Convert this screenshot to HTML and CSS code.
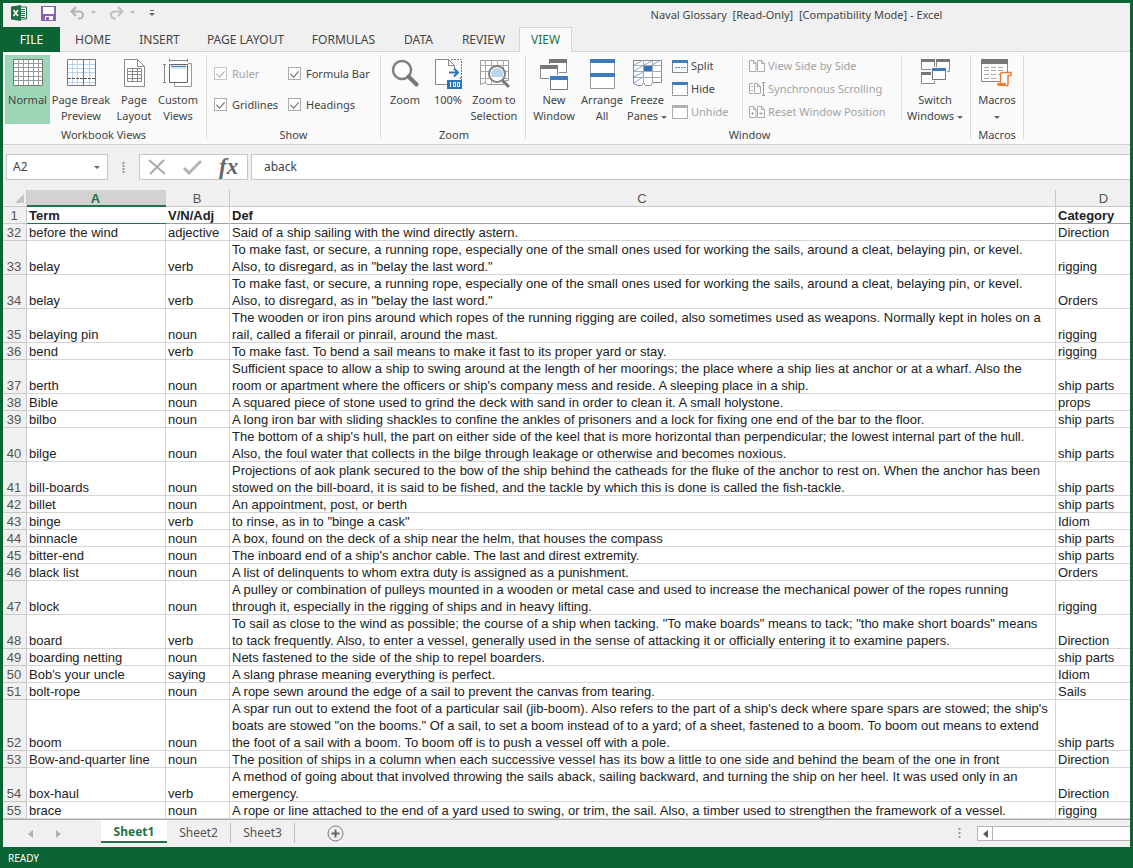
FILE: index.html
```html
<!DOCTYPE html>
<html lang="en">
<head>
<meta charset="utf-8">
<title>Naval Glossary - Excel</title>
<link rel="stylesheet" href="styles.css">
</head>
<body>
<div class="app">
  <header class="titlebar">
    <div class="quick">
      <svg class="logo" width="16" height="16" viewBox="0 0 16 16"><path d="M8 2h7.500v12H8z" fill="#fff" stroke="#1e7145"/><path d="M10 4.500h4M10 6.500h4M10 8.500h4M10 10.500h4M10 12.500h4" stroke="#1e7145"/><path d="M0 1.500L10 0v16L0 14.500z" fill="#1e7145"/><path d="M2.500 5l4.500 6M7 5l-4.500 6" stroke="#fff" stroke-width="1.500"/></svg>
      <button class="qbtn save" aria-label="Save"><svg width="15" height="15" viewBox="0 0 15 15"><path d="M0 0h15v15H0z" fill="#8a63b0"/><path d="M2 1h11v7H2zM4 10h8v4H4z" fill="#fff"/><path d="M5 11h3v3H5z" fill="#8a63b0"/></svg></button>
      <button class="qbtn undo" aria-label="Undo"><svg width="26" height="14" viewBox="0 0 26 14"><path d="M6 1L1.500 5.500 6 10M2 5.500h7a3.500 3.500 0 0 1 1 7H8" fill="none" stroke="#b4b4b4" stroke-width="2"/><path d="M21 5h5l-2.500 3z" fill="#b8b8b8"/></svg></button>
      <button class="qbtn redo" aria-label="Redo"><svg width="26" height="14" viewBox="0 0 26 14"><path d="M8 1l4.500 4.500L8 10M12 5.500H5a3.500 3.500 0 0 0-1 7h2" fill="none" stroke="#c0c0c0" stroke-width="2"/><path d="M20 5h5l-2.500 3z" fill="#b8b8b8"/></svg></button>
      <button class="qbtn more" aria-label="Customize toolbar"><svg width="6" height="7" viewBox="0 0 6 7"><path d="M1 .500h4" stroke="#666"/><path d="M0 3h6L3 6z" fill="#666"/></svg></button>
    </div>
    <h1 class="title">Naval Glossary&nbsp; [Read-Only]&nbsp; [Compatibility Mode] - Excel</h1>
  </header>

  <nav class="tabs">
    <button class="tab file">FILE</button>
    <button class="tab">HOME</button>
    <button class="tab">INSERT</button>
    <button class="tab">PAGE LAYOUT</button>
    <button class="tab">FORMULAS</button>
    <button class="tab">DATA</button>
    <button class="tab">REVIEW</button>
    <button class="tab active">VIEW</button>
  </nav>

  <section class="ribbon">
    <div class="group g-views">
      <div class="tools">
        <button class="big w-normal on"><svg width="30" height="27" viewBox="0 0 30 27"><path d="M.5.500h29v26H.500z" fill="#fff" stroke="#777"/><path d="M5.500 1v25M10.500 1v25M15.500 1v25M20.500 1v25M25.500 1v25M1 4.500h28M1 8.500h28M1 12.500h28M1 17.500h28M1 21.500h28" stroke="#9a9a9a"/></svg><span>Normal</span></button>
        <button class="big w-break"><svg width="30" height="27" viewBox="0 0 30 27"><path d="M1.500.500h28v26h-28z" fill="#fff" stroke="#777"/><path d="M6.500 1v25M11.500 1v25M23.500 1v25M2 5.500h27M2 9.500h27M2 13.500h27M2 23.500h27" stroke="#b9d3ea"/><path d="M17.500 1v25" stroke="#4a7ebb"/><path d="M2 19.500h27" stroke="#555" stroke-dasharray="3 1"/></svg><span>Page Break<br>Preview</span></button>
        <button class="big w-page"><svg width="23" height="28" viewBox="0 0 23 28"><path d="M1.500.500h13l7 7v20h-20z" fill="#fff" stroke="#888"/><path d="M14.500.500v7h7" fill="none" stroke="#888"/><path d="M4.500 9.500h14v13h-14zM4.500 12.500h14M4.500 15.500h14M4.500 19.500h14M9.500 9.500v13M14.500 9.500v13" fill="none" stroke="#888"/></svg><span>Page<br>Layout</span></button>
        <button class="big w-page"><svg width="30" height="28" viewBox="0 0 30 28"><path d="M25 4.500h3.500v23h-17V24" fill="#fff" stroke="#999"/><path d="M6.500 5.500h18v18h-18z" fill="#fff" stroke="#666"/><path d="M8 6h15v4H8z" fill="#d5e5f4"/><path d="M8 7.500h15" stroke="#4a7ebb"/><path d="M6 1.500h18M6.500 0v3M24.500 0v3M1.500 5v18M0 5.500h3M0 23.500h3" stroke="#888"/></svg><span>Custom<br>Views</span></button>
      </div>
      <div class="caption">Workbook Views</div>
    </div>
    <div class="group g-show">
      <div class="checks">
        <label class="dim"><input type="checkbox" checked disabled>Ruler</label>
        <label><input type="checkbox" checked>Formula Bar</label>
        <label><input type="checkbox" checked>Gridlines</label>
        <label><input type="checkbox" checked>Headings</label>
      </div>
      <div class="caption">Show</div>
    </div>
    <div class="group g-zoom">
      <div class="tools">
        <button class="big w-page"><svg width="28" height="28" viewBox="0 0 28 28"><circle cx="11" cy="11" r="9" fill="#fff" stroke="#808080" stroke-width="2.500"/><path d="M17.500 17.500l8 8" stroke="#777" stroke-width="4" stroke-linecap="round"/></svg><span>Zoom</span></button>
        <button class="big w-hundred"><svg width="28" height="31" viewBox="0 0 28 31"><path d="M13 25.500H1.500V.500h13l6 6V9" fill="#fff" stroke="#888"/><path d="M14.500.500v6h6" fill="none" stroke="#888"/><path d="M17 .500h10.500V21M26.500 18v3" fill="none" stroke="#777" stroke-dasharray="2 1"/><path d="M15 13.500h8M20 9.500l4 4-4 4" fill="none" stroke="#2f75b9" stroke-width="2"/><path d="M13 21h15v9H13z" fill="#2e75b6"/><path d="M16.500 23v5M19.500 23.500h2v4h-2zM23.500 23.500h2v4h-2z" stroke="#fff" fill="none"/></svg><span>100%</span></button>
        <button class="big w-sel"><svg width="31" height="29" viewBox="0 0 31 29"><path d="M1.500 1.500h28v20h-3l-2 4H8l-2-2-4.500 2z" fill="#fff" stroke="#999"/><path d="M6.500 1v24M12.500 1v24M18.500 1v5M24.500 1v24M1 6.500h28M1 12.500h28M1 19.500h28" stroke="#aaa"/><circle cx="18" cy="15" r="8" fill="#fff" stroke="#808080" stroke-width="2"/><path d="M12 15a6 6 0 0 1 12 0v3H12z" fill="#b9d5f0"/><path d="M24 22l5 5" stroke="#777" stroke-width="3" stroke-linecap="round"/></svg><span>Zoom to<br>Selection</span></button>
      </div>
      <div class="caption">Zoom</div>
    </div>
    <div class="group g-window">
      <div class="tools">
        <button class="big w-sel"><svg width="28" height="31" viewBox="0 0 28 31"><path d="M9.500.500h17v13h-17z" fill="#fff" stroke="#888"/><path d="M9 0h18v4H9z" fill="#777"/><path d="M0 5h19v15H0z" fill="#fafafa"/><path d="M.5 6.500h17v13H.500z" fill="#fff" stroke="#888"/><path d="M0 6h18v4H0z" fill="#777"/><path d="M9 16h18v15H9z" fill="#fafafa"/><path d="M10.500 17.500h17v13h-17z" fill="#fff" stroke="#777"/><path d="M10 17h18v4H10z" fill="#3f7cbc"/></svg><span>New<br>Window</span></button>
        <button class="big w-arr"><svg width="25" height="30" viewBox="0 0 25 30"><path d="M.5.500h24v29H.500z" fill="#fff" stroke="#999"/><path d="M0 0h25v4H0zM0 14h25v4H0z" fill="#3f7cbc"/></svg><span>Arrange<br>All</span></button>
        <button class="big w-page"><svg width="29" height="28" viewBox="0 0 29 28"><path d="M.5 1.500h28v22h-9l-2 3h-5l-2-3-2 3h-4l-4-2z" fill="#fff" stroke="#888"/><path d="M10.500 1v23M19.500 1v23M1 6.500h28M1 12.500h28M1 18.500h28" stroke="#aaa"/><path d="M1 6l9-5M1 12L20 1M1 18l9-5M1 24l9-6M19 6l9-5" stroke="#7ba6d4"/><path d="M11 7h8v5h-8z" fill="#2e75b6"/></svg><span>Freeze<br>Panes <i class="caret"></i></span></button>
        <div class="stack s1">
          <button class="small"><svg width="16" height="13" viewBox="0 0 16 13"><path d="M.5.500h15v12H.500z" fill="#fff" stroke="#888"/><path d="M0 0h16v3H0z" fill="#3f7cbc"/><path d="M3 7.500h11" stroke="#4a7ebb" stroke-dasharray="2 1"/></svg>Split</button>
          <button class="small"><svg width="16" height="14" viewBox="0 0 16 14"><path d="M.5.500h15v13H.500z" fill="#fff" stroke="#666" stroke-dasharray="2 1"/><path d="M0 0h16v3H0z" fill="#3f7cbc"/></svg>Hide</button>
          <button class="small dim" disabled><svg width="16" height="14" viewBox="0 0 16 14"><path d="M.5.500h15v13H.500z" fill="#fff" stroke="#aaa"/><path d="M0 0h16v3H0z" fill="#b0b0b0"/></svg>Unhide</button>
        </div>
        <div class="stack s2">
          <button class="small dim" disabled><svg width="16" height="12" viewBox="0 0 16 12"><path d="M.5.500h4l2.500 3v8H.500zM8.500.500h4l3 3v8h-7zM4.500.500v3H7M12.500.500v3h3" fill="#fff" stroke="#aaa"/></svg>View Side by Side</button>
          <button class="small dim" disabled><svg width="16" height="14" viewBox="0 0 16 14"><path d="M4 1.500H.500v10H4M2 4.500h2M2 8.500h2M5.500 1.500h3l3 3v7h-6zM8.500 1.500v3h3" fill="none" stroke="#aaa"/><path d="M13 .500h3M14.500 0v13M13 13.500h3" stroke="#999"/></svg>Synchronous Scrolling</button>
          <button class="small dim" disabled><svg width="16" height="12" viewBox="0 0 16 12"><path d="M.5.500h4l2.500 3v8H.500zM8.500.500h4l3 3v8h-7zM4.500.500v3H7M12.500.500v3h3M2 7.500h3M3.500 6v3M10 7.500h4M12 6v3" fill="#fff" stroke="#aaa"/></svg>Reset Window Position</button>
        </div>
        <button class="big w-switch"><svg width="29" height="26" viewBox="0 0 29 26"><path d="M.5.500h13v10H.500zM15.500.500h13v12h-13zM.5 13.500h13v11H.500z" fill="#fff" stroke="#888"/><path d="M0 0h14v3H0zM15 0h14v3H15zM0 13h14v3H0z" fill="#777"/><path d="M10 8h16v14H10z" fill="#fafafa"/><path d="M11.500 9.500h13v11h-13z" fill="#fff" stroke="#777"/><path d="M11 9h14v3H11z" fill="#3f7cbc"/></svg><span>Switch<br>Windows <i class="caret"></i></span></button>
      </div>
      <div class="caption">Window</div>
    </div>
    <div class="group g-macros">
      <div class="tools">
        <button class="big w-macro"><svg width="32" height="28" viewBox="0 0 32 28"><path d="M.5.500h26v22H.500z" fill="#fff" stroke="#888"/><path d="M0 0h27v5H0z" fill="#777"/><path d="M3 8.500h20M3 11.500h20M3 15.500h20M3 19.500h14" stroke="#aaa" stroke-dasharray="5 2"/><path d="M19.500 25V15.500q0-2 2-2H30v3h-3V25q0 2-2 2" fill="#fff" stroke="#ed7d31" stroke-width="1.500"/><path d="M16 24h9v3h-7q-2 0-2-3z" fill="#ed7d31"/></svg><span>Macros<br><i class="caret"></i></span></button>
      </div>
      <div class="caption">Macros</div>
    </div>
  </section>

  <section class="formula">
    <div class="namebox"><input class="name" aria-label="Name box" value="A2"><i class="caret"></i></div>
    <svg class="grip" width="3" height="11" viewBox="0 0 3 11"><path d="M.5 0h2v2h-2zM.5 3h2v2h-2zM.5 6h2v2h-2zM.5 9h2v2h-2z" fill="#999"/></svg>
    <div class="fxbox">
      <button aria-label="Cancel"><svg width="18" height="16" viewBox="0 0 18 16"><path d="M1 1l16 14M16 1L2 15" stroke="#aaa" stroke-width="2"/></svg></button>
      <button aria-label="Enter"><svg width="19" height="16" viewBox="0 0 19 16"><path d="M1 9l5 5L18 2" fill="none" stroke="#b4b4b4" stroke-width="3"/></svg></button>
      <button class="fx" aria-label="Insert function">fx</button>
    </div>
    <input class="entry" aria-label="Formula bar" value="aback">
  </section>

  <main class="sheet">
    <table>
      <colgroup><col class="c-n"><col class="c-a"><col class="c-b"><col class="c-c"><col class="c-d"></colgroup>
      <thead>
        <tr><th class="corner"><svg width="9" height="9" viewBox="0 0 9 9"><path d="M9 0v9H0z" fill="#c4c4c4"/></svg></th><th class="sel">A</th><th>B</th><th>C</th><th>D</th></tr>
      </thead>
      <tbody>
        <tr class="head"><th>1</th><td class="sel">Term</td><td>V/N/Adj</td><td>Def</td><td>Category</td></tr>
        <tr><th>32</th><td>before the wind</td><td>adjective</td><td>Said of a ship sailing with the wind directly astern.</td><td>Direction</td></tr>
        <tr><th>33</th><td>belay</td><td>verb</td><td>To make fast, or secure, a running rope, especially one of the small ones used for working the sails, around a cleat, belaying pin, or kevel.<br>Also, to disregard, as in "belay the last word."</td><td>rigging</td></tr>
        <tr><th>34</th><td>belay</td><td>verb</td><td>To make fast, or secure, a running rope, especially one of the small ones used for working the sails, around a cleat, belaying pin, or kevel.<br>Also, to disregard, as in "belay the last word."</td><td>Orders</td></tr>
        <tr><th>35</th><td>belaying pin</td><td>noun</td><td>The wooden or iron pins around which ropes of the running rigging are coiled, also sometimes used as weapons. Normally kept in holes on a<br>rail, called a fiferail or pinrail, around the mast.</td><td>rigging</td></tr>
        <tr><th>36</th><td>bend</td><td>verb</td><td>To make fast. To bend a sail means to make it fast to its proper yard or stay.</td><td>rigging</td></tr>
        <tr><th>37</th><td>berth</td><td>noun</td><td>Sufficient space to allow a ship to swing around at the length of her moorings; the place where a ship lies at anchor or at a wharf. Also the<br>room or apartment where the officers or ship's company mess and reside. A sleeping place in a ship.</td><td>ship parts</td></tr>
        <tr><th>38</th><td>Bible</td><td>noun</td><td>A squared piece of stone used to grind the deck with sand in order to clean it. A small holystone.</td><td>props</td></tr>
        <tr><th>39</th><td>bilbo</td><td>noun</td><td>A long iron bar with sliding shackles to confine the ankles of prisoners and a lock for fixing one end of the bar to the floor.</td><td>ship parts</td></tr>
        <tr><th>40</th><td>bilge</td><td>noun</td><td>The bottom of a ship's hull, the part on either side of the keel that is more horizontal than perpendicular; the lowest internal part of the hull.<br>Also, the foul water that collects in the bilge through leakage or otherwise and becomes noxious.</td><td>ship parts</td></tr>
        <tr><th>41</th><td>bill-boards</td><td>noun</td><td>Projections of aok plank secured to the bow of the ship behind the catheads for the fluke of the anchor to rest on. When the anchor has been<br>stowed on the bill-board, it is said to be fished, and the tackle by which this is done is called the fish-tackle.</td><td>ship parts</td></tr>
        <tr><th>42</th><td>billet</td><td>noun</td><td>An appointment, post, or berth</td><td>ship parts</td></tr>
        <tr><th>43</th><td>binge</td><td>verb</td><td>to rinse, as in to "binge a cask"</td><td>Idiom</td></tr>
        <tr><th>44</th><td>binnacle</td><td>noun</td><td>A box, found on the deck of a ship near the helm, that houses the compass</td><td>ship parts</td></tr>
        <tr><th>45</th><td>bitter-end</td><td>noun</td><td>The inboard end of a ship's anchor cable. The last and direst extremity.</td><td>ship parts</td></tr>
        <tr><th>46</th><td>black list</td><td>noun</td><td>A list of delinquents to whom extra duty is assigned as a punishment.</td><td>Orders</td></tr>
        <tr><th>47</th><td>block</td><td>noun</td><td>A pulley or combination of pulleys mounted in a wooden or metal case and used to increase the mechanical power of the ropes running<br>through it, especially in the rigging of ships and in heavy lifting.</td><td>rigging</td></tr>
        <tr><th>48</th><td>board</td><td>verb</td><td>To sail as close to the wind as possible; the course of a ship when tacking. "To make boards" means to tack; "tho make short boards" means<br>to tack frequently. Also, to enter a vessel, generally used in the sense of attacking it or officially entering it to examine papers.</td><td>Direction</td></tr>
        <tr><th>49</th><td>boarding netting</td><td>noun</td><td>Nets fastened to the side of the ship to repel boarders.</td><td>ship parts</td></tr>
        <tr><th>50</th><td>Bob's your uncle</td><td>saying</td><td>A slang phrase meaning everything is perfect.</td><td>Idiom</td></tr>
        <tr><th>51</th><td>bolt-rope</td><td>noun</td><td>A rope sewn around the edge of a sail to prevent the canvas from tearing.</td><td>Sails</td></tr>
        <tr><th>52</th><td>boom</td><td>noun</td><td>A spar run out to extend the foot of a particular sail (jib-boom). Also refers to the part of a ship's deck where spare spars are stowed; the ship's<br>boats are stowed "on the booms." Of a sail, to set a boom instead of to a yard; of a sheet, fastened to a boom. To boom out means to extend<br>the foot of a sail with a boom. To boom off is to push a vessel off with a pole.</td><td>ship parts</td></tr>
        <tr><th>53</th><td>Bow-and-quarter line</td><td>noun</td><td>The position of ships in a column when each successive vessel has its bow a little to one side and behind the beam of the one in front</td><td>Direction</td></tr>
        <tr><th>54</th><td>box-haul</td><td>verb</td><td>A method of going about that involved throwing the sails aback, sailing backward, and turning the ship on her heel. It was used only in an<br>emergency.</td><td>Direction</td></tr>
        <tr><th>55</th><td>brace</td><td>noun</td><td>A rope or line attached to the end of a yard used to swing, or trim, the sail. Also, a timber used to strengthen the framework of a vessel.</td><td>rigging</td></tr>
      </tbody>
    </table>
  </main>

  <section class="sheetbar">
    <div class="arrows">
      <button aria-label="Previous sheet"><svg width="5" height="8" viewBox="0 0 5 8"><path d="M5 0v8L0 4z" fill="#b0b0b0"/></svg></button>
      <button aria-label="Next sheet"><svg width="5" height="8" viewBox="0 0 5 8"><path d="M0 0v8l5-4z" fill="#b0b0b0"/></svg></button>
    </div>
    <button class="stab active">Sheet1</button>
    <button class="stab">Sheet2</button>
    <button class="stab">Sheet3</button>
    <button class="add" aria-label="New sheet"><svg width="17" height="17" viewBox="0 0 17 17"><circle cx="8.500" cy="8.500" r="7.500" fill="none" stroke="#777"/><path d="M8.500 4.500v8M4.500 8.500h8" stroke="#666" stroke-width="2"/></svg></button>
    <div class="scroll">
      <svg width="3" height="11" viewBox="0 0 3 11"><path d="M.5 0h2v2h-2zM.5 4h2v2h-2zM.5 8h2v2h-2z" fill="#999"/></svg>
      <div class="track"><button aria-label="Scroll left"><svg width="5" height="8" viewBox="0 0 5 8"><path d="M5 0v8L0 4z" fill="#555"/></svg></button></div>
    </div>
  </section>
  <footer class="status">READY</footer>
</div>
</body>
</html>
```
FILE: styles.css
```css
* { box-sizing: border-box; }
body { margin: 0; font: 12px/16px "Noto Sans", "Open Sans", sans-serif; color: #444; background: #0b6433; }
button { font: inherit; color: inherit; background: none; border: 0; padding: 0; }
input { font: inherit; color: inherit; margin: 0; }
svg { display: block; flex: none; }

.app { min-height: 100vh; display: flex; flex-direction: column; padding: 3px 3px 0; overflow: hidden; }

.titlebar { display: flex; align-items: center; height: 24px; background: #f0f0f0; }
.quick { display: flex; align-items: center; height: 20px; margin-bottom: auto; padding-left: 8px; }
.save { margin-left: 14px; }
.undo { margin-left: 14px; }
.redo { margin-left: 14px; }
.more { margin-left: 13px; }
.title { flex: 1; margin: 0; padding-left: 308px; text-align: center; font-size: 11px; font-weight: 400; white-space: nowrap; }

.tabs { display: grid; grid-template-columns: 57px 66px 67px 105px 91px 59px 71px 53px 1fr; height: 25px; background: #f0f0f0; border-bottom: 1px solid #d6d6d6; }
.tab { padding-top: 2px; white-space: nowrap; }
.tab.file { background: #0b6433; color: #fff; margin-bottom: -1px; padding-top: 0; }
.tab.active { color: #217346; background: #fafafa; border: 1px solid #d6d6d6; border-bottom: 0; margin-bottom: -1px; padding-top: 0; }

.ribbon { display: flex; height: 93px; background: #fafafa; border-bottom: 1px solid #d2d2d2; font-size: 11px; }
.group { display: flex; flex-direction: column; margin: 3px 0 5px; border-right: 1px solid #dadada; }
.g-views { width: 204px; padding-left: 2px; }
.g-show { width: 174px; }
.g-zoom { width: 145px; padding-left: 2px; }
.g-window { width: 445px; padding-left: 3px; }
.g-macros { width: 53px; }
.tools { display: flex; flex: 1; }
.caption { height: 12px; text-align: center; line-height: 16px; }
.g-views .caption { padding-right: 4px; }
.big { display: flex; flex-direction: column; align-items: center; height: 69px; padding-top: 4px; white-space: nowrap; }
.big svg { margin-bottom: auto; }
.big span { height: 32px; }
.on { background: #9fd5b7; }
.w-normal { width: 45px; }
.w-break { width: 62px; }
.w-page { width: 44px; }
.w-hundred { width: 42px; }
.w-sel { width: 50px; }
.w-arr { width: 46px; }
.w-switch { width: 66px; }
.w-macro { width: 52px; }
.caret { display: inline-block; vertical-align: middle; border: 3px solid transparent; border-top: 3px solid #666; border-bottom: 0; }
.dim { color: #a3a3a3; }
.stack { display: flex; flex-direction: column; gap: 7px; padding-top: 3px; height: 66px; }
.s1 { width: 73px; padding-left: 3px; }
.s2 { width: 160px; padding-left: 6px; border-left: 1px solid #e1e1e1; border-right: 1px solid #e1e1e1; }
.small { display: flex; align-items: center; gap: 3px; height: 16px; white-space: nowrap; }

.checks { flex: 1; display: grid; grid-template-columns: 74px 1fr; grid-template-rows: 31px 31px; padding: 3px 0 0 7px; }
.checks label { display: flex; align-items: center; gap: 5px; white-space: nowrap; }
.checks input { appearance: none; width: 13px; height: 13px; border: 1px solid #ababab; background: #fff; display: grid; place-items: center; }
.checks input::before { content: ""; width: 4px; height: 7px; margin-bottom: 2px; border: solid #666; border-width: 0 1px 1px 0; transform: rotate(42deg); }
.checks .dim input { border-color: #c6c6c6; }
.checks .dim input::before { border-color: #aaa; }

.formula { display: flex; height: 45px; padding: 9px 0 10px 3px; background: #f0f0f0; font-size: 12px; }
.namebox { display: flex; align-items: center; width: 102px; padding-right: 7px; border: 1px solid #c6c6c6; background: #fff; }
.name { flex: 1; min-width: 0; border: 0; background: none; padding: 0 6px; }
.grip { margin: 8px 14px; }
.fxbox { display: flex; align-items: center; width: 109px; border: 1px solid #c6c6c6; background: #fff; gap: 17px; padding-left: 8px; }
.fx { font: italic bold 23px/24px "Liberation Serif", serif; color: #666; }
.entry { flex: 1; min-width: 0; margin-left: 3px; padding: 0 12px; border: 1px solid #c6c6c6; border-right: 0; background: #fff; }

.sheet { overflow: hidden; background: #fff; font: 13px/17px "Liberation Sans", Arial, sans-serif; color: #222; border-bottom: 1px solid #ababab; }
table { table-layout: fixed; width: 1150px; border-collapse: separate; border-spacing: 0; }
.c-n { width: 24px; }
.c-a { width: 139px; }
.c-b { width: 64px; }
.c-c { width: 826px; }
.c-d { width: 97px; }
th { padding: 0 2px 0 0; height: 17px; font-weight: 400; color: #555; background: #f0f0f0; vertical-align: bottom; box-shadow: inset -1px -1px #c8c8c8; }
thead th.sel { background: #d2d2d2; color: #217346; font-weight: 700; box-shadow: inset 0 -2px #217346; }
.corner svg { margin: 0 1px 4px auto; }
td { padding: 0 2px; height: 17px; vertical-align: bottom; white-space: nowrap; box-shadow: inset -1px -1px #d6d6d6; }
.head td { font-weight: 700; box-shadow: inset -1px 0 #d6d6d6, inset 0 -1px #a0a0a0; }
.head td.sel { box-shadow: inset 0 -1px #217346; }

.sheetbar { display: flex; height: 27px; background: #f0f0f0; color: #555; }
.arrows { display: flex; align-items: center; gap: 23px; width: 98px; padding-left: 25px; }
.stab { width: 64px; margin: 3px 0 4px; border-right: 1px solid #c0c0c0; }
.stab.active { width: 66px; margin: 0 0 4px; padding-top: 3px; background: #fff; color: #217346; font-weight: 700; border: 0; border-bottom: 2px solid #217346; }
.add { margin-left: 32px; }
.scroll { margin-left: auto; display: flex; align-items: center; gap: 16px; width: 172px; }
.track { flex: 1; height: 15px; border: 1px solid #b5b5b5; border-right: 0; background: #fff; display: flex; }
.track button { width: 15px; border-right: 1px solid #b5b5b5; display: grid; place-items: center; }
.status { flex: 1; padding: 3px 5px 2px; color: #fff; font-size: 10px; background: #0b6433; }
```
